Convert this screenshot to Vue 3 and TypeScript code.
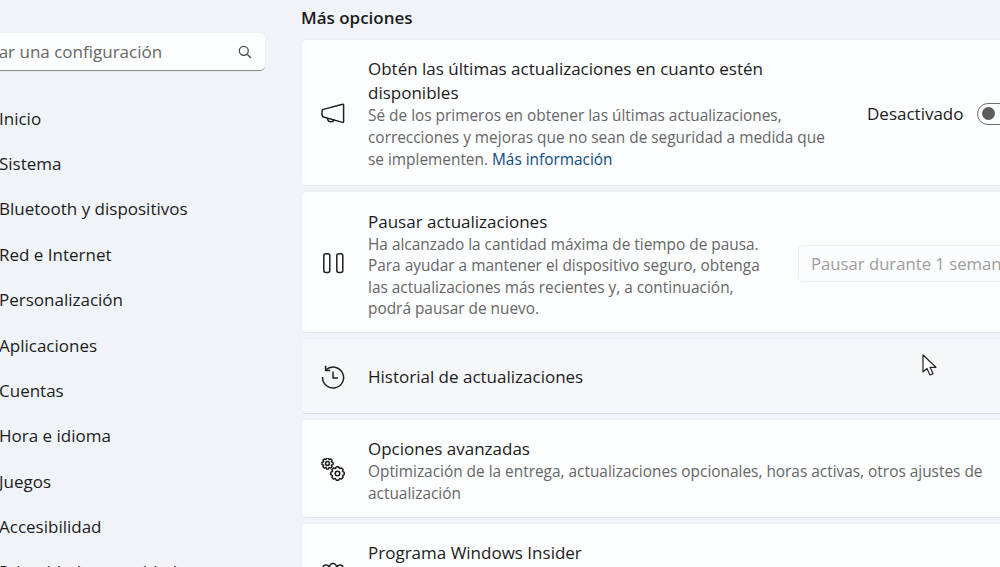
<script setup lang="ts">
const navItems = [
  'Inicio',
  'Sistema',
  'Bluetooth y dispositivos',
  'Red e Internet',
  'Personalización',
  'Aplicaciones',
  'Cuentas',
  'Hora e idioma',
  'Juegos',
  'Accesibilidad',
  'Privacidad y seguridad'
]

// outline of a cog, used by the "Opciones avanzadas" icon
const gearPath = (cx: number, cy: number, r: number, teeth: number) => {
  const pts: string[] = []
  const step = (Math.PI * 2) / teeth
  for (let i = 0; i < teeth; i++) {
    const a = i * step
    const corners: [number, number][] = [
      [r - 1.4, a - step * 0.5],
      [r, a - step * 0.22],
      [r, a + step * 0.22],
      [r - 1.4, a + step * 0.5]
    ]
    for (const [rad, ang] of corners) {
      pts.push(`${(cx + rad * Math.cos(ang)).toFixed(2)} ${(cy + rad * Math.sin(ang)).toFixed(2)}`)
    }
  }
  return `M${pts.join('L')}Z`
}

const smallGear = gearPath(6.5, 5.5, 5.6, 8)
const bigGear = gearPath(16.5, 15.5, 6.8, 8)
</script>

<template>
  <div class="page">
    <aside class="sidebar">
      <div class="search">
        <span class="search-text">Buscar una configuración</span>
        <svg class="search-icon" viewBox="0 0 16 16" width="16" height="16">
          <circle cx="6.8" cy="6.8" r="4.5" />
          <path d="M10.2 10.2 14 14" />
        </svg>
      </div>
      <nav class="nav">
        <div v-for="item in navItems" :key="item" class="nav-item">{{ item }}</div>
      </nav>
    </aside>

    <main class="main">
      <h2 class="heading">Más opciones</h2>

      <section class="card card-first">
        <svg class="icon" viewBox="0 0 24 24">
          <path d="M1.6 7.6 21.6 2.2c.6-.2 1 .2 1 .8v16.600c0 .6-.4 1-1 .8L2.400 15c-1-.3-1.500-1-1.500-3.400 0-2.400.2-3.600.7-4z" />
          <path d="M6.400 16.300c.2 2.200 1.800 3.500 3.700 3.500 1.600 0 2.900-.9 3.400-2.200" />
        </svg>
        <div class="body">
          <div class="title">Obtén las últimas actualizaciones en cuanto estén<br />disponibles</div>
          <div class="desc">
            Sé de los primeros en obtener las últimas actualizaciones,<br />
            correcciones y mejoras que no sean de seguridad a medida que<br />
            se implementen. <a class="link">Más información</a>
          </div>
        </div>
        <div class="control">
          <span class="toggle-label">Desactivado</span>
          <span class="toggle"><span class="knob"></span></span>
        </div>
      </section>

      <section class="card card-pause">
        <svg class="icon" viewBox="0 0 24 24">
          <rect x="2.800" y="2.800" width="6" height="18.600" rx="2" />
          <rect x="15.800" y="2.800" width="6" height="18.600" rx="2" />
        </svg>
        <div class="body body-tall">
          <div class="title">Pausar actualizaciones</div>
          <div class="desc desc-tight">
            Ha alcanzado la cantidad máxima de tiempo de pausa.<br />
            Para ayudar a mantener el dispositivo seguro, obtenga<br />
            las actualizaciones más recientes y, a continuación,<br />
            podrá pausar de nuevo.
          </div>
        </div>
        <div class="select">Pausar durante 1 semana</div>
      </section>

      <section class="card card-hover">
        <svg class="icon" viewBox="0 0 24 24">
          <path d="M5 4.800A10.500 10.500 0 1 1 1.600 12" />
          <path d="M4.600 .8V5.400H9.200" />
          <path d="M12 6.500V13h5" />
        </svg>
        <div class="body">
          <div class="title">Historial de actualizaciones</div>
        </div>
      </section>

      <section class="card">
        <svg class="icon" viewBox="0 0 24 24">
          <path :d="smallGear" />
          <circle cx="6.500" cy="5.500" r="1.900" />
          <path :d="bigGear" />
          <circle cx="16.500" cy="15.500" r="2.300" />
        </svg>
        <div class="body body-tall">
          <div class="title">Opciones avanzadas</div>
          <div class="desc">
            Optimización de la entrega, actualizaciones opcionales, horas activas, otros ajustes de<br />
            actualización
          </div>
        </div>
      </section>

      <section class="card">
        <svg class="icon" viewBox="0 0 24 24">
          <circle cx="5" cy="6" r="3" />
          <circle cx="12" cy="5" r="3.400" />
          <circle cx="19" cy="6" r="3" />
          <path d="M2 20v-6c0-2 1-3 3-3h14c2 0 3 1 3 3v6" />
        </svg>
        <div class="body body-tall">
          <div class="title">Programa Windows Insider</div>
          <div class="desc">
            Obtén compilaciones preliminares de Windows<br />
            para compartir comentarios
          </div>
        </div>
      </section>
    </main>

    <svg class="cursor" viewBox="0 0 16 24" width="16" height="24">
      <path d="M1 1v17l4-3.600 3 6.600 3-1.400-3-6.300h6z" />
    </svg>
  </div>
</template>

<style scoped>
.page {
  position: relative;
  display: flex;
  width: 1000px;
  height: 567px;
  overflow: hidden;
  background: #f0f4f9;
  color: #1b1b1b;
  font-family: "Open Sans", "Noto Sans", sans-serif;
  font-size: 17px;
}

.sidebar {
  flex: none;
  width: 301px;
  padding-top: 33px;
}

.search {
  display: flex;
  align-items: center;
  justify-content: space-between;
  width: 286px;
  height: 38px;
  margin-left: -21px;
  padding-right: 12px;
  box-sizing: border-box;
  background: #fcfdfe;
  border-radius: 5px;
  border-bottom: 1px solid #8e8e8e;
  box-shadow: 0 0 0 1px #eceef1;
}

.search-text {
  margin-left: -18px;
  color: #666;
  white-space: nowrap;
}

.search-icon {
  flex: none;
  fill: none;
  stroke: #4a4a4a;
  stroke-width: 1.300;
}

.nav {
  margin-top: 24.400px;
  margin-left: -1px;
}

.nav-item {
  display: flex;
  align-items: center;
  height: 45.400px;
  white-space: nowrap;
}

.main {
  flex: none;
  width: 760px;
}

.heading {
  margin: 6px 0 9px;
  font-size: 17px;
  line-height: 24px;
  font-weight: 600;
}

.card {
  display: flex;
  align-items: center;
  box-sizing: border-box;
  height: 99px;
  margin-bottom: 5px;
  padding: 2px 0 0 19px;
  background: #fcfdfe;
  border: 1px solid #eceef1;
  border-bottom-color: #e3e5e8;
  border-radius: 5px;
}

.card-first {
  height: 147px;
}

.card-pause {
  height: 142px;
}

.card-hover {
  height: 76px;
  background: #f6f7fb;
  border-bottom-color: #d8dade;
}

.icon {
  flex: none;
  width: 24px;
  height: 24px;
  margin-right: 23px;
  fill: none;
  stroke: #1f1f1f;
  stroke-width: 1.500;
  stroke-linejoin: round;
}

.body {
  flex: none;
  white-space: nowrap;
}

.body-tall {
  padding-top: 3px;
}

.title {
  font-size: 17px;
  line-height: 24px;
}

.desc {
  color: #666;
  font-size: 15.400px;
  line-height: 22px;
}

.desc-tight {
  line-height: 21.500px;
}

.link {
  color: #0f4a85;
}

.control {
  position: absolute;
  left: 867px;
  top: 102px;
  display: flex;
  align-items: center;
}

.toggle {
  display: flex;
  align-items: center;
  box-sizing: border-box;
  width: 44px;
  height: 22px;
  margin-left: 13px;
  padding-left: 4px;
  border: 1.500px solid #6e6e6e;
  border-radius: 11px;
}

.knob {
  width: 13px;
  height: 13px;
  border-radius: 50%;
  background: #5c5c5c;
}

.select {
  position: absolute;
  left: 798px;
  top: 245px;
  box-sizing: border-box;
  width: 240px;
  height: 37px;
  padding-left: 12px;
  font-size: 16.700px;
  line-height: 35px;
  color: #9d9d9d;
  white-space: nowrap;
  background: #fbfcfd;
  border: 1px solid #eceef1;
  border-radius: 5px;
}

.cursor {
  position: absolute;
  left: 922px;
  top: 354px;
  fill: #fff;
  stroke: #222;
  stroke-width: 1.200;
  stroke-linejoin: round;
}
</style>

<style>
html,
body {
  margin: 0;
  background: #f0f4f9;
}
</style>
